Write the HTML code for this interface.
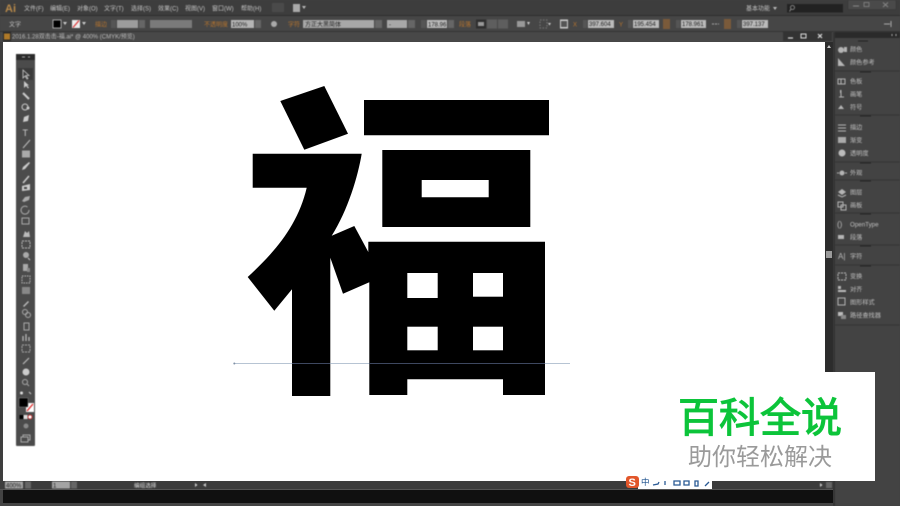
<!DOCTYPE html>
<html><head><meta charset="utf-8"><style>
html,body{margin:0;padding:0;background:#444;width:900px;height:506px;overflow:hidden}
svg{display:block;position:absolute;left:0;top:0}
text{font-family:"Liberation Sans","Noto Sans CJK SC",sans-serif}
.ui{filter:blur(.45px)}
.m text{font-size:6px;fill:#c4c4c4}
.o{font-size:6px;fill:#b8752e}
.f{font-size:6px;fill:#222}
.p text{font-size:6.2px;fill:#c0c0c0}
.i{fill:#b5b5b5;stroke:none}
.l{stroke:#b5b5b5;stroke-width:1;fill:none}
</style></head><body>
<svg width="900" height="506" viewBox="0 0 900 506">
<rect width="900" height="506" fill="#434343"/>
<g class="ui">
<rect x="0" y="0" width="900" height="15" fill="#3d3d3d"/>
<rect x="0" y="15" width="900" height="1" fill="#2e2e2e"/>
<rect x="0" y="16" width="900" height="16" fill="#464646"/>
<rect x="0" y="31" width="900" height="1" fill="#333"/>
<rect x="0" y="32" width="835" height="10" fill="#484848"/>
<text x="5" y="12" style="font-size:11px;font-weight:bold;fill:#b98a4a">Ai</text>
<g class="m">
<text x="24" y="10.500">文件(F)</text><text x="50" y="10.500">编辑(E)</text><text x="77" y="10.500">对象(O)</text><text x="104" y="10.500">文字(T)</text><text x="131" y="10.500">选择(S)</text><text x="158" y="10.500">效果(C)</text><text x="185" y="10.500">视图(V)</text><text x="212" y="10.500">窗口(W)</text><text x="241" y="10.500">帮助(H)</text>
<text x="746" y="10.500">基本功能</text>
<text x="9" y="26.500">文字</text>
</g>
<rect x="272" y="3" width="12" height="9" fill="#4a4a4a"/>
<rect x="293" y="4" width="7" height="8" fill="#aaa"/><path d="M302 6h4l-2 3z" fill="#bbb"/>
<path d="M773 7h4l-2 3z" fill="#bbb"/>
<rect x="787" y="4" width="56" height="8.500" fill="#222"/>
<circle cx="792.500" cy="7.500" r="2" fill="none" stroke="#999" stroke-width=".8"/><path d="M791 9l-1.500 2.500" stroke="#999" stroke-width=".8"/>
<rect x="848" y="0" width="48" height="9.500" fill="#4a4a4a" stroke="#383838" stroke-width=".6"/>
<path d="M853 6h6" stroke="#888"/><rect x="864" y="2.500" width="5" height="4" fill="none" stroke="#888" stroke-width=".8"/><path d="M883 2.500l5 4.500M888 2.500l-5 4.500" stroke="#888" stroke-width=".9"/>

<rect x="53" y="20" width="8" height="8" fill="#000" stroke="#ddd" stroke-width=".7"/>
<path d="M63 22h4l-2 3z" fill="#ccc"/>
<rect x="72" y="20" width="8" height="8" fill="#eee"/><path d="M73 27.500l6-7" stroke="#d33" stroke-width="1.200"/>
<path d="M82 22h4l-2 3z" fill="#ccc"/>
<text class="o" x="95" y="26.500">描边</text>
<rect x="111" y="20" width="5" height="8" fill="#555"/>
<rect x="117" y="20" width="21" height="8" fill="#9c9c9c"/><rect x="139" y="20" width="6" height="8" fill="#666"/>
<rect x="150" y="20" width="42" height="8" fill="#7a7a7a"/>
<text class="o" x="204" y="26.500">不透明度</text>
<rect x="231" y="20" width="23" height="8" fill="#b5b5b5"/><text class="f" x="232" y="26.500">100%</text>
<rect x="255" y="20" width="6" height="8" fill="#666"/>
<circle cx="274" cy="24" r="3" fill="#aaa"/>
<text class="o" x="288" y="26.500">字符</text>
<rect x="303" y="20" width="71" height="8" fill="#a8a8a8"/><text class="f" x="305" y="26.500">方正大黑简体</text>
<rect x="375" y="20" width="7" height="8" fill="#666"/>
<rect x="387" y="20" width="20" height="8" fill="#a8a8a8"/><text class="f" x="389" y="26.500">-</text>
<rect x="408" y="20" width="7" height="8" fill="#666"/>
<rect x="421" y="20" width="5" height="8" fill="#555"/>
<rect x="427" y="20" width="20" height="8" fill="#bbb"/><text class="f" x="428" y="26.500">178.96</text>
<rect x="448" y="20" width="6" height="8" fill="#666"/>
<text class="o" x="459" y="26.500">段落</text>
<rect x="476" y="19.500" width="10" height="9" fill="#2e2e2e"/><rect x="478" y="22" width="6" height="4" fill="#999"/>
<rect x="487" y="19.500" width="10" height="9" fill="#5e5e5e"/><rect x="498" y="19.500" width="10" height="9" fill="#5e5e5e"/>
<rect x="517" y="21" width="8" height="6" fill="#999"/><path d="M527 22h3l-1.500 3z" fill="#ccc"/>
<rect x="540" y="20" width="7" height="8" fill="none" stroke="#888" stroke-dasharray="1.500 1.500" stroke-width=".8"/><path d="M548 23h3l-1.500 2.500z" fill="#ccc"/>
<rect x="560" y="19.500" width="8" height="9" fill="#ccc"/><rect x="561" y="21" width="6" height="6" fill="#555"/>
<text class="o" x="573" y="26.500">X</text>
<rect x="583" y="20" width="4" height="8" fill="#555"/><rect x="588" y="20" width="26" height="8" fill="#bbb"/><text class="f" x="589" y="26">397.604</text>
<text class="o" x="619" y="26.500">Y</text>
<rect x="628" y="20" width="4" height="8" fill="#555"/><rect x="633" y="20" width="26" height="8" fill="#bbb"/><text class="f" x="634" y="26">195.454</text>
<rect x="663" y="19" width="7" height="10" fill="#7a5a3a"/>
<rect x="676" y="20" width="4" height="8" fill="#555"/><rect x="681" y="20" width="25" height="8" fill="#bbb"/><text class="f" x="682" y="26">178.961</text>
<path d="M712 24h7" stroke="#aaa" stroke-dasharray="2 1"/>
<rect x="724" y="19" width="7" height="10" fill="#7a5a3a"/>
<rect x="737" y="20" width="4" height="8" fill="#555"/><rect x="742" y="20" width="26" height="8" fill="#bbb"/><text class="f" x="743" y="26">397.137</text>
<path d="M884 24h6" stroke="#aaa"/><path d="M891 21v6" stroke="#aaa"/>

<rect x="3" y="32" width="8" height="9" fill="#2a2a2a"/><rect x="4" y="33.500" width="6" height="6" fill="#b07a28"/>
<text x="12" y="38.700" style="font-size:6px;fill:#bdbdbd">2016.1.28双击击-福.ai* @ 400% (CMYK/预览)</text>
<rect x="783" y="32" width="49" height="9" fill="#333"/>
<path d="M788 38h5" stroke="#ddd" stroke-width="1.200"/><rect x="801" y="34" width="5" height="4" fill="none" stroke="#ddd"/><path d="M818 34l4 4M822 34l-4 4" stroke="#ddd" stroke-width="1.200"/>
</g>

<!-- canvas -->
<rect x="3" y="42" width="822" height="439" fill="#fff"/>
<rect x="0" y="42" width="3" height="448" fill="#3e3e3e"/>
<rect x="825" y="42" width="8" height="439" fill="#2c2c2c"/>
<path d="M827 48l2-3 2 3z" fill="#ccc"/>
<rect x="826" y="251" width="6" height="7" fill="#9a9a9a"/>

<!-- right panel -->
<g class="ui">
<rect x="833" y="32" width="2" height="474" fill="#333"/>
<rect x="835" y="32" width="65" height="474" fill="#434343"/>
<rect x="835" y="32" width="65" height="6" fill="#2a2a2a"/>
<path d="M892 34v2M896 34v2" stroke="#aaa"/>
<g stroke="#353535" stroke-width="1">
<path d="M835 71h65M835 115h65M835 162h65M835 180h65M835 213h65M835 245h65M835 265h65M835 325h65"/>
</g>
<g stroke="#222" stroke-width="1"><path d="M858 41h10M860 72h11M860 116h11M860 163h11M860 181h11M860 214h11M860 246h11M860 266h11"/></g>
<g class="p">
<text x="850" y="51.500">颜色</text><text x="850" y="64.500">颜色参考</text>
<text x="850" y="83.500">色板</text><text x="850" y="96.500">画笔</text><text x="850" y="109.500">符号</text>
<text x="850" y="129.500">描边</text><text x="850" y="142.500">渐变</text><text x="850" y="155.500">透明度</text>
<text x="850" y="175">外观</text><text x="850" y="194.500">图层</text><text x="850" y="207.500">画板</text>
<text x="850" y="226.500">OpenType</text><text x="850" y="239.500">段落</text><text x="850" y="258.500">字符</text>
<text x="850" y="278.500">变换</text><text x="850" y="291.500">对齐</text><text x="850" y="304.500">图形样式</text><text x="850" y="317.500">路径查找器</text>
</g>
<circle cx="841" cy="50" r="3" class="i"/><rect x="844" y="47" width="3" height="5" class="i"/>
<path d="M838 66v-8l7 8z" class="i"/>
<path d="M838 79h7v5h-7zM841 79v5" class="l"/>
<path d="M841 92v5M839 97h5" class="l"/><rect x="840" y="90" width="1.500" height="3" class="i"/>
<path d="M838 109l3-4 3 4zM841 109v2" class="i"/>
<path d="M838 125h8M838 128h8M838 131h8" class="l" stroke-width=".8"/>
<rect x="838" y="137" width="8" height="6" fill="#aaa"/>
<circle cx="842" cy="153" r="3.500" fill="#bbb"/>
<circle cx="842" cy="173" r="2.500" class="i"/><path d="M837 173h2M845 173h2" class="l"/>
<path d="M838 192l4-3 4 3-4 3z" class="i"/><path d="M838 195l4 2 4-2" class="l"/>
<rect x="838" y="202" width="5" height="5" class="l"/><rect x="841" y="205" width="5" height="5" class="l"/>
<text x="837" y="227" style="font-size:8px;fill:#bbb">()</text>
<rect x="838" y="235" width="6" height="4" class="i"/>
<text x="838" y="259" style="font-size:8px;fill:#bbb">A|</text>
<rect x="838" y="273" width="8" height="7" fill="none" stroke="#bbb" stroke-dasharray="2 1"/>
<path d="M838 291h8" stroke="#bbb" stroke-width="2"/><rect x="838" y="286" width="3" height="3" class="i"/>
<rect x="838" y="298" width="7" height="7" class="l"/>
<rect x="838" y="312" width="5" height="4" fill="#bbb"/><rect x="841" y="315" width="5" height="4" fill="#888"/>
</g>

<!-- status -->
<rect x="3" y="481" width="830" height="8" fill="#3c3c3c"/>
<rect x="0" y="489" width="833" height="1" fill="#555"/>
<rect x="3" y="490" width="830" height="13" fill="#101010"/>
<rect x="0" y="503" width="833" height="3" fill="#444"/>
<g class="ui">
<rect x="5" y="481.500" width="18" height="7" fill="#a4a4a4"/><text class="f" x="6" y="487.500">400%</text>
<rect x="25" y="481.500" width="6" height="7" fill="#666"/>
<rect x="52" y="481.500" width="18" height="7" fill="#a4a4a4"/><text class="f" x="53" y="487.500">1</text>
<rect x="71" y="481.500" width="6" height="7" fill="#666"/>
<text x="134" y="487.500" style="font-size:5.600px;fill:#ddd">编组选择</text>
<path d="M195 483l2.500 2-2.500 2zM206 483l-3 2 3 2z" fill="#ccc"/>
<path d="M820 483l2.500 2-2.500 2z" fill="#ccc"/><rect x="826" y="482" width="6" height="6" fill="#666"/>
</g>

<!-- glyph -->
<g fill="#000">
<path d="M280.300 101L324.300 86L348 133.700L304.300 149.700Z"/>
<path d="M252.700 153.700H361.700C358 176 348 210 331.700 235.700L354.300 226L368.300 252V241.700H545V395H503V379.300H407.300V395H369.300V282.300L343 293.700L330.300 257.700V396H292V289.300L274.300 310.700L247.700 277C275 252 298 225 306.700 187.700H252.700Z"/>
<path d="M364 100H549V135.300H364Z"/>
<path fill-rule="evenodd" d="M382.300 150H530.300V227H382.300ZM421.700 180V197.300H488.700V180Z"/>
</g>
<g fill="#fff">
<rect x="407.300" y="273" width="30.400" height="25"/>
<rect x="473" y="273" width="30" height="23.700"/>
<rect x="407.300" y="326.700" width="30.400" height="23.600"/>
<rect x="473" y="326.700" width="30" height="23.600"/>
</g>
<path d="M234 363.500H570" stroke="#9fb0c4" stroke-width=".8"/>
<path d="M292 363.500H330M369 363.500H545" stroke="#2c3550" stroke-width=".8"/>
<circle cx="234.300" cy="363.500" r="1" fill="#7f90a5"/>

<!-- toolbar -->
<g class="ui">
<rect x="16" y="54" width="19" height="392" rx="1" fill="#4b4b4b"/>
<rect x="16" y="54" width="19" height="6" fill="#2b2b2b"/>
<path d="M22 57h3M28 57h2" stroke="#aaa"/>
<rect x="18" y="68" width="15" height="12" fill="#3a3a3a"/>
<path d="M23 70v8l2-2 2 3 1-.500-2-3h3z" fill="none" stroke="#ccc" stroke-width=".8"/>
<path d="M24 81v7l2-2 2 2.500 1-1-2-2h2z" fill="#ccc"/>
<path d="M23 93l6 6" stroke="#ccc" stroke-width="2"/>
<circle cx="25" cy="107" r="3" fill="none" stroke="#ccc"/><circle cx="28" cy="108" r="1.500" fill="#ccc"/>
<path d="M29 115l-5 2-1 5 5-1z" fill="#ccc"/>
<text x="22.500" y="136" style="font-size:9px;fill:#ccc">T</text>
<path d="M23 148l7-8" stroke="#bbb"/>
<rect x="22" y="150.500" width="8" height="7" fill="#aaa"/>
<path d="M22 170l3-1 5-6-1-1-6 5z" fill="#ccc"/>
<path d="M23 183l6-7" stroke="#ccc" stroke-width="1.500"/>
<path d="M22 186l8-2v6l-8 1z" fill="#ccc"/><rect x="24" y="187" width="3" height="2" fill="#444"/>
<path d="M22 201l3-4 5-1-1 4-5 2z" fill="#aaa"/>
<path d="M29 210a4 4 0 1 1-1.500-3" fill="none" stroke="#aaa"/>
<rect x="22" y="218" width="7" height="6" fill="none" stroke="#aaa"/>
<path d="M23 237l2-6 2 2 2-2 1 6z" fill="#bbb"/>
<rect x="22" y="241" width="8" height="7" fill="none" stroke="#bbb" stroke-dasharray="2 1"/>
<circle cx="26" cy="255" r="3" fill="#aaa"/><path d="M28 258l2 2" stroke="#ccc"/>
<path d="M23 264h5v7h-5z" fill="#aaa"/><path d="M27 268h3v4h-3z" fill="#888"/>
<rect x="22" y="276" width="8" height="7" fill="none" stroke="#bbb" stroke-dasharray="1.500 1"/>
<rect x="22" y="287" width="8" height="7" fill="#888"/>
<path d="M23 306l5-5 1 1-5 5z" fill="#bbb"/>
<circle cx="25" cy="312" r="2.500" fill="none" stroke="#aaa"/><circle cx="28" cy="315" r="2.500" fill="none" stroke="#aaa"/>
<rect x="24" y="323" width="5" height="7" fill="none" stroke="#aaa"/>
<path d="M23 341v-5M26 341v-7M29 341v-4" stroke="#bbb" stroke-width="1.200"/>
<rect x="22" y="345" width="8" height="7" fill="none" stroke="#aaa" stroke-dasharray="2 1"/>
<path d="M23 364l6-6" stroke="#bbb" stroke-width="1.200"/>
<circle cx="26" cy="372" r="3.500" fill="#ccc"/>
<circle cx="25" cy="382" r="2.500" fill="none" stroke="#aaa"/><path d="M27 384l2 2" stroke="#aaa"/>
<circle cx="21.500" cy="393" r="1.500" fill="#ddd"/><path d="M29 392l2 2" stroke="#ccc"/>
<rect x="26" y="403" width="8" height="9" fill="#fff"/><path d="M27 411l6-7" stroke="#d22" stroke-width="1.300"/>
<rect x="19" y="398" width="9" height="9" fill="#000" stroke="#888" stroke-width=".5"/>
<rect x="19.500" y="415" width="4" height="4" fill="#000"/><rect x="23.500" y="415" width="4" height="4" fill="#ddd"/><circle cx="30" cy="417" r="2" fill="#fff" stroke="#c22" stroke-width=".8"/>
<circle cx="26" cy="426" r="2.500" fill="#888"/>
<rect x="23" y="435" width="7" height="5" fill="none" stroke="#aaa"/><rect x="21" y="437" width="7" height="5" fill="#4b4b4b" stroke="#aaa"/>
</g>

<!-- watermark -->
<rect x="640" y="372" width="235" height="109" fill="#fff"/>
<text x="678" y="432" style="font-size:41px;fill:#0cc43a;stroke:#0cc43a;stroke-width:1.100px;font-family:'Noto Sans CJK SC',sans-serif">百科全说</text>
<text x="688" y="465" style="font-size:24px;fill:#9a9a9a;font-family:'Noto Sans CJK SC',sans-serif">助你轻松解决</text>

<!-- IME -->
<rect x="638" y="476" width="74" height="13" fill="#fff"/>
<rect x="626" y="476" width="13" height="12" rx="3" fill="#e2562a"/>
<text x="628.500" y="486" style="font-size:11px;font-weight:bold;fill:#fff">S</text>
<text x="641" y="485" style="font-size:8.500px;fill:#1a4f8c">中</text>
<path d="M653 485l5-1 1-2M665 481v4M674 481h6v4h-6zM684 481h5v4h-5zM695 481h3v5h-3zM705 486l4-4" stroke="#2a5a94" stroke-width="1.300" fill="none"/>
</svg>
</body></html>
